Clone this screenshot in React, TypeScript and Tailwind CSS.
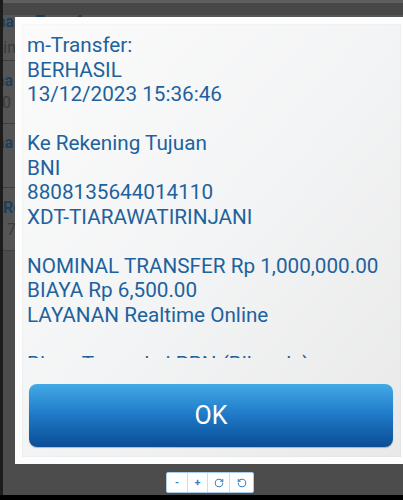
import { RotateCw, RotateCcw } from "lucide-react";

function Edge({ text, bold, w }: { text: string; bold?: boolean; w: string }) {
  // right-aligned so the word runs off to the left, like the list behind the dialog
  return (
    <div className={`flex ${w} justify-end whitespace-nowrap`}>
      <span
        className={
          bold
            ? "text-[16px] leading-[22px] font-bold text-[#1e3f5c]"
            : "text-[16px] leading-[22px] text-[#3a3a3a]"
        }
      >
        {text}
      </span>
    </div>
  );
}

function BackgroundPage() {
  return (
    <div className="flex flex-col">
      <div className="h-[3px] bg-[#5f5f5f]" />
      <div className="h-[12px] bg-[#474747]" />
      <div className="flex h-[45px] flex-col bg-[#555555]">
        <div className="-mt-[4px] flex items-start">
          <Edge text="Nama" bold w="w-[11px]" />
          <span className="ml-[21px] text-[16px] leading-[22px] font-bold text-[#1e3f5c]">Transfer</span>
        </div>
        <div className="mt-[4px]">
          <Edge text="Satin" w="w-[13px]" />
        </div>
      </div>
      <div className="flex h-[63px] flex-col justify-center border-t border-[#3f3f3f] bg-[#555555]">
        <Edge text="Nama" bold w="w-[10px]" />
        <Edge text="0" w="w-[8px]" />
      </div>
      <div className="flex h-[64px] flex-col border-t border-[#3f3f3f] bg-[#555555] pt-[8px]">
        <Edge text="Nama" bold w="w-[10px]" />
      </div>
      <div className="flex h-[63px] flex-col justify-center border-t border-[#3f3f3f] bg-[#555555]">
        <p className="text-[16px] leading-[22px] font-bold text-[#1e3f5c]">Re</p>
        <p className="ml-[4px] text-[16px] leading-[22px] text-[#3a3a3a]">7</p>
      </div>
      <div className="h-[300px] border-t border-[#3f3f3f] bg-[#4c4c4c]" />
    </div>
  );
}

function ZoomControls() {
  return (
    <div className="absolute left-[166px] top-[472px] flex h-[21px] overflow-hidden rounded-[2px] border border-[#a9cdea] bg-white text-[#3b82c4]">
      <div className="flex w-[21px] items-center justify-center border-r border-[#c9dff1] text-[10px] leading-none font-bold">-</div>
      <div className="flex w-[20px] items-center justify-center border-r border-[#c9dff1] text-[11px] leading-none font-bold">+</div>
      <div className="flex w-[22px] items-center justify-center border-r border-[#c9dff1]">
        <RotateCw size={10} strokeWidth={2.5} />
      </div>
      <div className="flex w-[23px] items-center justify-center">
        <RotateCcw size={10} strokeWidth={2.5} />
      </div>
    </div>
  );
}

export default function App() {
  return (
    <div className="relative h-[500px] w-[403px] overflow-hidden bg-[#4c4c4c] font-['Roboto',sans-serif]">
      <div className="absolute left-0 top-0 h-full w-[3px] bg-[#1c1c1c]" />
      <div className="ml-[3px]">
        <BackgroundPage />
      </div>

      {/* dialog */}
      <div className="absolute left-[15px] top-[17px] h-[447px] w-[393px] bg-[#fdfdfd] p-[7px]">
        <div className="flex h-full flex-col bg-gradient-to-br from-[#fbfbfb] via-[#f3f4f5] to-[#e9e9e9] shadow-[inset_0_0_2px_rgba(0,0,0,0.08)]">
          <div className="h-[334px] overflow-hidden pl-[5px] pt-[9px] text-[20.7px] leading-[24.5px] text-[#1d629d]">
            <p>m-Transfer:</p>
            <p>BERHASIL</p>
            <p>13/12/2023 15:36:46</p>
            <p>&nbsp;</p>
            <p>Ke Rekening Tujuan</p>
            <p>BNI</p>
            <p>8808135644014110</p>
            <p>XDT-TIARAWATIRINJANI</p>
            <p>&nbsp;</p>
            <p>NOMINAL TRANSFER Rp 1,000,000.00</p>
            <p>BIAYA Rp 6,500.00</p>
            <p>LAYANAN Realtime Online</p>
            <p>&nbsp;</p>
            <p>Biaya Transaksi PPN (Bila ada)</p>
            <p>Rp 0.00</p>
          </div>
          <div className="mt-[26px] pl-[7px] pr-[8px]">
            <button className="flex h-[63px] w-full items-center justify-center rounded-[8px] bg-gradient-to-b from-[#43aae6] via-[#1e78c6] to-[#0b4e95] text-[25px] text-white shadow-[0_1px_1px_rgba(0,0,0,0.25)]">
              OK
            </button>
          </div>
        </div>
      </div>

      <ZoomControls />
      <div className="absolute bottom-0 left-0 h-[5px] w-full bg-black" />
    </div>
  );
}
